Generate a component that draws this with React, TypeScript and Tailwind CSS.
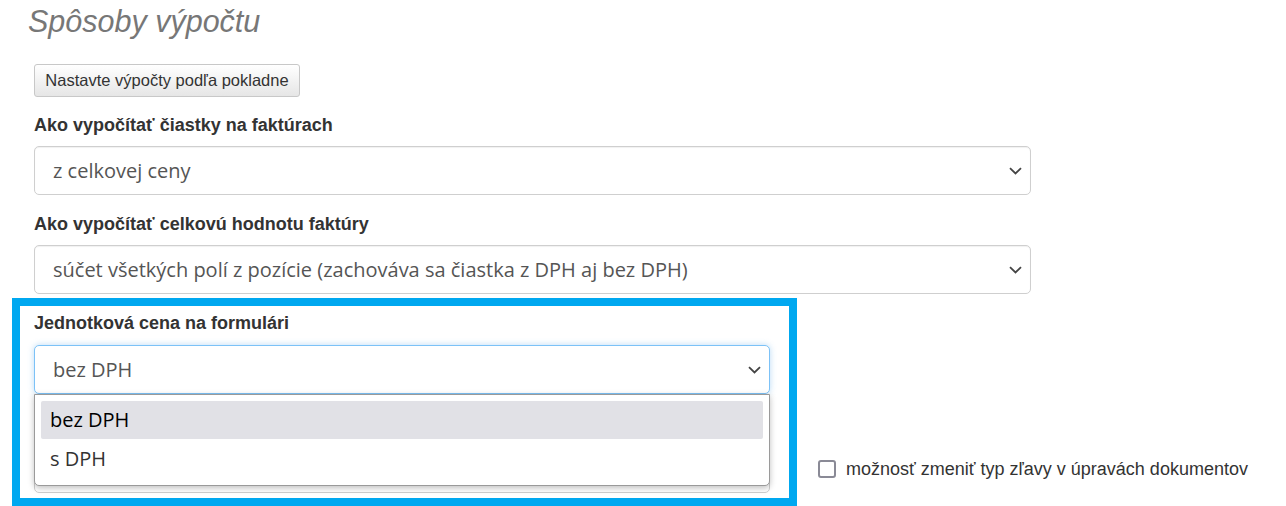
const labelFont = { fontFamily: '"Liberation Sans", Arial, sans-serif' };
const selectFont = { fontFamily: '"Open Sans", "Noto Sans", sans-serif' };

function Chevron() {
  return (
    <svg width="13" height="8" viewBox="0 0 13 8" className="shrink-0">
      <path d="M1 1.2 L6.5 6.5 L12 1.2" fill="none" stroke="#444" strokeWidth="1.8" />
    </svg>
  );
}

function FakeSelect({ value, focused = false, className = '' }: { value: string; focused?: boolean; className?: string }) {
  return (
    <div
      className={
        'h-[49px] flex items-center justify-between pl-[18px] pr-[8px] bg-white rounded-[5px] border ' +
        (focused
          ? 'border-[#7cc2f7] shadow-[0_0_6px_rgba(102,175,233,0.45)] '
          : 'border-[#cfcfcf] shadow-[inset_0_1px_1px_rgba(0,0,0,0.06)] ') +
        className
      }
    >
      <span className="text-[20px] text-[#555]" style={selectFont}>
        {value}
      </span>
      <Chevron />
    </div>
  );
}

export default function App() {
  return (
    <div className="min-h-screen bg-white" style={labelFont}>
      <div className="pl-[34px] pt-[5px]">
        {/* Nadpis */}
        <h1 className="ml-[-6px] text-[30.5px] leading-[32px] italic text-[#777]">Spôsoby výpočtu</h1>

        <button className="mt-[27px] h-[33px] w-[266px] rounded-[3px] border border-[#c8c8c8] bg-gradient-to-b from-white to-[#e6e6e6] text-[16.5px] text-[#333]">
          Nastavte výpočty podľa pokladne
        </button>

        <label className="block mt-[17px] mb-[10px] text-[18px] leading-[22px] font-bold text-[#333]">
          Ako vypočítať čiastky na faktúrach
        </label>
        <FakeSelect value="z celkovej ceny" className="w-[997px]" />

        <label className="block mt-[18px] mb-[10px] text-[18px] leading-[22px] font-bold text-[#333]">
          Ako vypočítať celkovú hodnotu faktúry
        </label>
        <FakeSelect value="súčet všetkých polí z pozície (zachováva sa čiastka z DPH aj bez DPH)" className="w-[997px]" />

        <div className="flex items-end mt-[4px]">
          {/* Zvýraznená sekcia */}
          <div className="ml-[-22px] w-[785px] border-[8px] border-[#00a8f0] pl-[14px] pt-[6px] pb-[5px]">
            <label className="block mb-[11px] text-[18px] leading-[22px] font-bold text-[#333]">
              Jednotková cena na formulári
            </label>
            <div className="relative w-[736px]">
              <FakeSelect value="bez DPH" focused />
              <FakeSelect value="" className="mt-[50px]" />

              {/* Otvorený zoznam */}
              <div className="absolute left-0 right-0 top-[49px] h-[92px] bg-white border border-[#9a9a9a] rounded-b-[5px] shadow-[0_2px_6px_rgba(0,0,0,0.25)] px-[6px] pt-[6px]">
                <div className="h-[38px] flex items-center pl-[9px] rounded-[2px] bg-[#e1e1e6] text-[20px] text-black" style={selectFont}>
                  bez DPH
                </div>
                <div className="h-[40px] flex items-center pl-[9px] text-[20px] text-[#333]" style={selectFont}>
                  s DPH
                </div>
              </div>
            </div>
          </div>

          <label className="flex items-center ml-[21px] mb-[26px] text-[18px] leading-[22px] text-[#333]">
            <span className="w-[18px] h-[18px] rounded-[3px] border-2 border-[#8a8a96] bg-white mr-[10px]" />
            možnosť zmeniť typ zľavy v úpravách dokumentov
          </label>
        </div>
      </div>
    </div>
  );
}
